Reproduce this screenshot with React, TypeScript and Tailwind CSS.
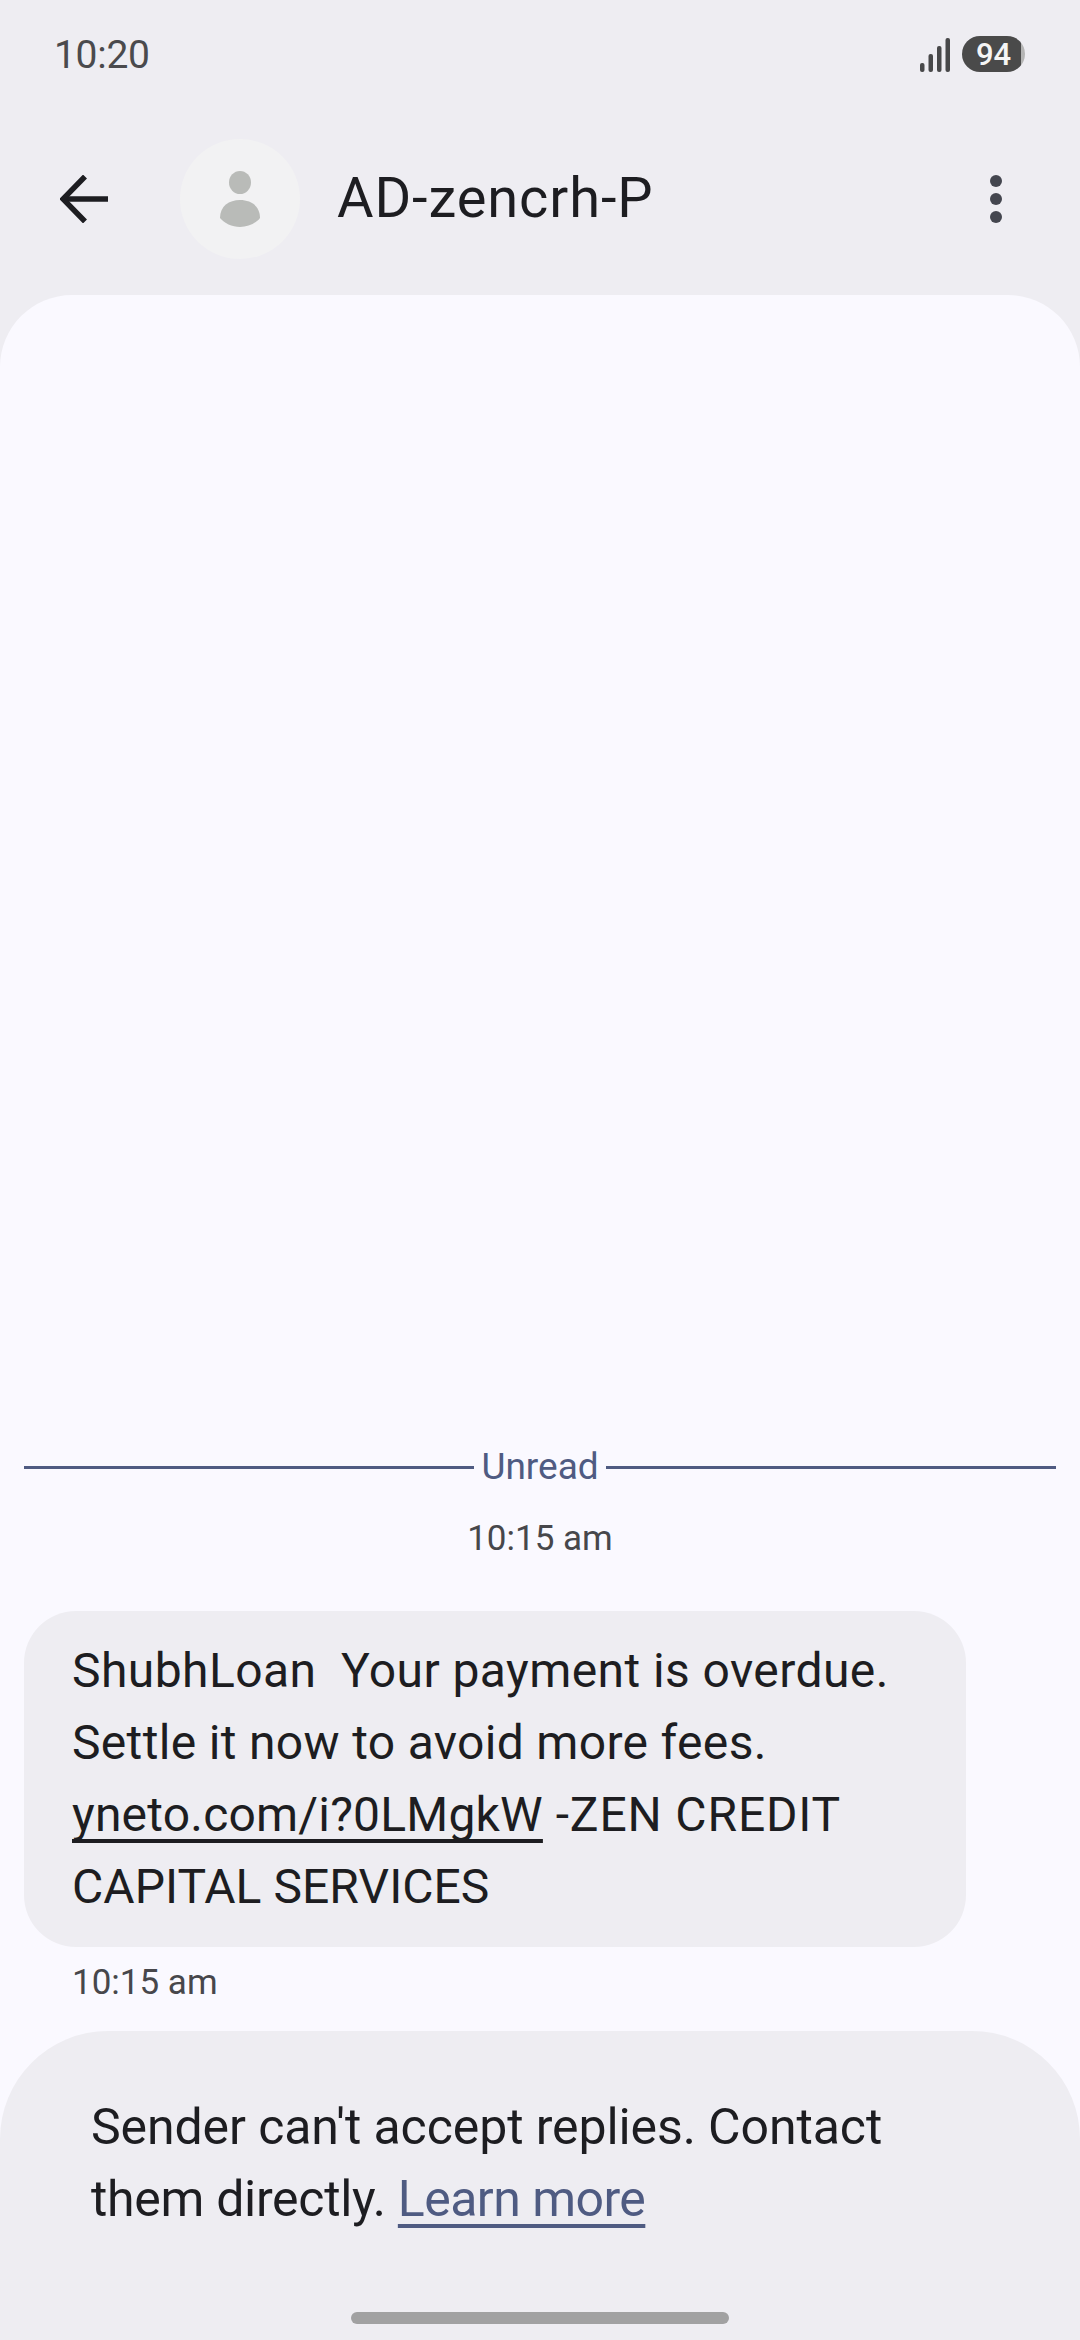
export default function App() {
  const sans = { fontFamily: "Roboto, sans-serif" };
  return (
    <div className="flex h-[2340px] w-[1080px] flex-col overflow-hidden bg-[#eeedf2] font-['Roboto',sans-serif]" style={sans}>
      <div className="flex h-[107px] shrink-0 items-start justify-between pl-[54px] pr-[55px] pt-[36px]">
        <span className="mt-[1px] text-[39px] leading-[36px] tracking-[-0.3px] text-[#4a4a4d]">10:20</span>
        <div className="flex items-center gap-[12px]">
          <svg width="30" height="34" viewBox="0 0 30 34" className="mt-[1px]">
            <rect x="0" y="25" width="4.5" height="9" rx="2" fill="#48484a" />
            <rect x="8.5" y="16" width="4.5" height="18" rx="2" fill="#48484a" />
            <rect x="17" y="8" width="4.5" height="26" rx="2" fill="#48484a" />
            <rect x="25.5" y="0" width="4.5" height="34" rx="2" fill="#48484a" />
          </svg>
          <div className="flex h-[36px] w-[63px] items-center justify-center overflow-hidden rounded-[18px] bg-[linear-gradient(to_right,#4a4a4a_94%,#b5b5b5_94%)] text-[31px] font-medium leading-none text-[#f5f5f5]">
            94
          </div>
        </div>
      </div>
      <div className="flex h-[188px] shrink-0 items-start">
        <div className="ml-[60px] mt-[68px]">
          <svg width="48" height="48" viewBox="0 0 48 48" fill="none" stroke="#1d1d21" strokeWidth="5.5" className="block">
            <path d="M48 24H3" />
            <path d="M25 1.5L3 24l22 22.500" />
          </svg>
        </div>
        <div className="ml-[72px] mt-[32px] flex h-[120px] w-[120px] items-center justify-center rounded-full bg-[#f2f2f3]">
          <svg width="40" height="56" viewBox="0 0 40 56">
            <ellipse cx="20" cy="11.500" rx="11" ry="11.500" fill="#b9bbb8" />
            <path d="M0 47C0 35 9 29 20 29s20 6 20 18c-4 5-12 9-20 9S4 52 0 47z" fill="#b9bbb8" />
          </svg>
        </div>
        <div className="ml-[37px] mt-[59px] text-[56px] leading-[64px] tracking-[0.9px] text-[#1d1d21]">AD-zencrh-P</div>
        <div className="ml-auto mr-[78px] mt-[68px] flex flex-col gap-[6px]">
          <div className="h-[12px] w-[12px] rounded-full bg-[#44464f]" />
          <div className="h-[12px] w-[12px] rounded-full bg-[#44464f]" />
          <div className="h-[12px] w-[12px] rounded-full bg-[#44464f]" />
        </div>
      </div>
      <div className="flex min-h-0 flex-1 flex-col justify-end rounded-t-[72px] bg-[#faf9ff]">
        <div className="-translate-y-[1px] flex items-center gap-[7px] px-[24px]">
          <div className="h-[3px] flex-1 bg-[#4f5b82]" />
          <span className="text-[37px] leading-[44px] text-[#4f5b82]">Unread</span>
          <div className="h-[3px] flex-1 bg-[#4f5b82]" />
        </div>
        <div className="mt-[27px] text-center text-[35px] leading-[44px] text-[#47474b]">10:15 am</div>
        <div className="ml-[24px] mt-[50px] w-[942px] rounded-[52px] bg-[#eeedf2] px-[48px] py-[24px] text-[48px] leading-[72px] tracking-[0.42px] text-[#1d1d21]">
          <div className="whitespace-pre">ShubhLoan  Your payment is overdue.</div>
          <div className="tracking-[0.33px]">Settle it now to avoid more fees.</div>
          <div><span className="tracking-[0.2px] underline decoration-[4px] underline-offset-[8px] [text-decoration-skip-ink:none]">yneto.com/i?0LMgkW</span><span className="tracking-[0.85px]"> -ZEN CREDIT</span></div>
          <div className="tracking-[0.05px]">CAPITAL SERVICES</div>
        </div>
        <div className="ml-[72px] mt-[14px] text-[35px] leading-[44px] text-[#47474b]">10:15 am</div>
        <div className="mt-[26px] flex h-[309px] flex-col rounded-t-[108px] bg-[#eeedf2]">
          <div className="pl-[91px] pt-[60px] text-[50px] leading-[72px] tracking-[-0.1px] text-[#1d1d21]">
            <div>Sender can't accept replies. Contact</div>
            <div className="tracking-[-0.3px]">them directly. <span className="tracking-[-0.55px] text-[#4f5b82] underline decoration-[4px] underline-offset-[8px] [text-decoration-skip-ink:none]">Learn more</span></div>
          </div>
          <div className="mx-auto mt-[77px] h-[12px] w-[378px] rounded-full bg-[#a1a1a2]" />
        </div>
      </div>
    </div>
  );
}
